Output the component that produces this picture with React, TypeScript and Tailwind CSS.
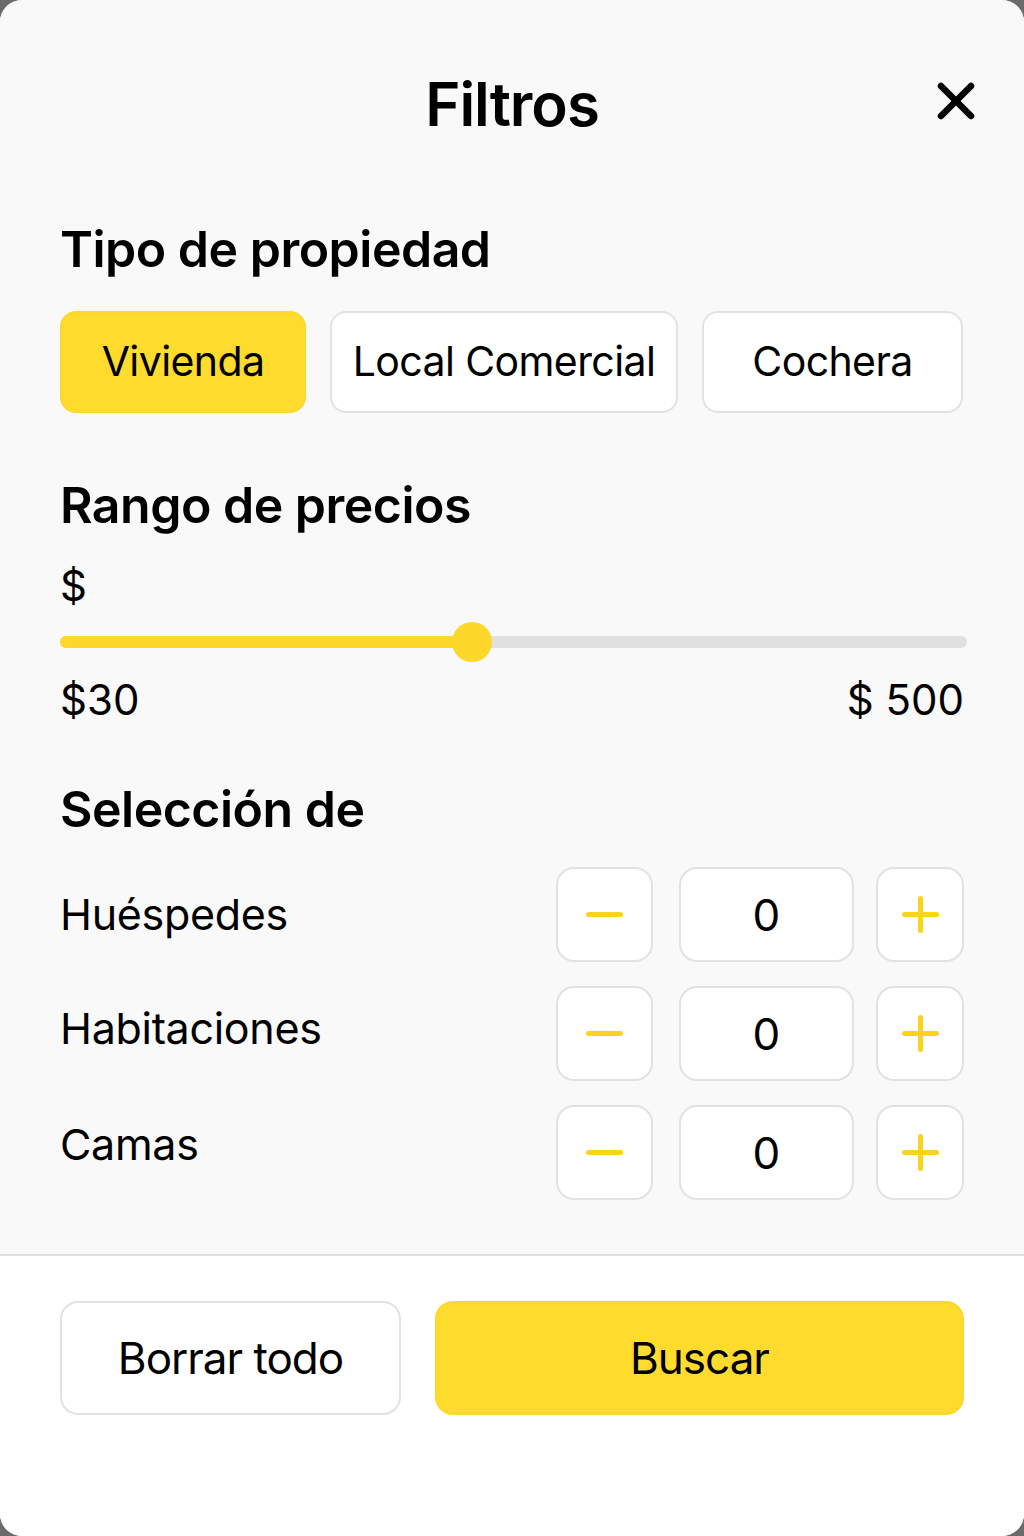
import { X } from "lucide-react";

const TYPES = [
  { label: "Vivienda", w: "w-[246px]", active: true },
  { label: "Local Comercial", w: "w-[348px]", active: false },
  { label: "Cochera", w: "w-[261px]", active: false },
];

// labels sit a bit higher than the box centre on the lower rows
const COUNTERS = [
  { label: "Huéspedes", nudge: "" },
  { label: "Habitaciones", nudge: "mb-[10px]" },
  { label: "Camas", nudge: "mb-[16px]" },
];

function Counter({ label, nudge }: { label: string; nudge: string }) {
  return (
    <div className="flex h-[95px] items-center">
      <span className={`flex-1 text-[43px] tracking-[-0.3px] text-black ${nudge}`}>{label}</span>
      <button
        type="button"
        className="flex h-[95px] w-[97px] items-center justify-center rounded-[18px] border-2 border-[#e2e2e2] bg-white"
      >
        <span className="block h-[5px] w-[37px] rounded-full bg-[#f9d31c]" />
      </button>
      <div className="ml-[26px] flex h-[95px] w-[175px] items-center justify-center rounded-[18px] border-2 border-[#e2e2e2] bg-white text-[44px] text-black">
        0
      </div>
      <button
        type="button"
        className="relative ml-[22px] flex h-[95px] w-[88px] items-center justify-center rounded-[18px] border-2 border-[#e2e2e2] bg-white"
      >
        <span className="absolute h-[5px] w-[37px] rounded-full bg-[#f9d31c]" />
        <span className="absolute h-[37px] w-[5px] rounded-full bg-[#f9d31c]" />
      </button>
    </div>
  );
}

export default function App() {
  return (
    <div className="min-h-[1536px] bg-[#6b6b6b] font-['Inter',sans-serif] text-black">
      <div className="flex h-[1536px] flex-col overflow-hidden rounded-[22px] bg-white">
        <div className="flex-1 bg-[#f9f9f9] px-[60px]">
          {/* header */}
          <div className="relative flex h-[219px] items-start justify-center pt-[66px]">
            <h1 className="text-[60px] font-semibold leading-[76px] tracking-[-1px]">Filtros</h1>
            <button type="button" className="absolute right-[-22px] top-[71px] text-black">
              <X size={60} strokeWidth={2.6} />
            </button>
          </div>

          {/* tipo de propiedad */}
          <h2 className="text-[50px] font-semibold leading-[60px] tracking-[-0.5px]">Tipo de propiedad</h2>
          <div className="mt-[32px] flex gap-[24px]">
            {TYPES.map((t) => (
              <button
                key={t.label}
                type="button"
                className={`${t.w} flex h-[102px] items-center justify-center rounded-[16px] border-2 text-[41px] tracking-[-0.6px] ${
                  t.active ? "border-[#fbd82a] bg-[#fedb2d]" : "border-[#e2e2e2] bg-white"
                }`}
              >
                {t.label}
              </button>
            ))}
          </div>

          {/* rango de precios */}
          <h2 className="mt-[62px] text-[50px] font-semibold leading-[60px] tracking-[-0.5px]">Rango de precios</h2>
          <div className="mt-[26px] text-[42px] leading-[50px]">$</div>
          <div className="relative mt-[11px] h-[40px] w-[907px]">
            <div className="absolute left-0 right-0 top-[14px] h-[12px] rounded-full bg-[#e0e0e0]" />
            <div className="absolute left-0 top-[14px] h-[12px] w-[413px] rounded-full bg-[#fdd82a]" />
            <div className="absolute left-[392px] top-0 h-[40px] w-[40px] rounded-full bg-[#fdd82a]" />
          </div>
          <div className="mt-[13px] flex justify-between text-[42px] leading-[50px]">
            <span>$30</span>
            <span>$ 500</span>
          </div>

          {/* selección */}
          <h2 className="mt-[54px] text-[50px] font-semibold leading-[60px] tracking-[-0.5px]">Selección de</h2>
          <div className="mt-[28px] flex flex-col gap-[24px]">
            {COUNTERS.map((c) => (
              <Counter key={c.label} label={c.label} nudge={c.nudge} />
            ))}
          </div>
        </div>

        {/* footer */}
        <div className="h-[282px] border-t-2 border-[#e0e0e0] bg-white px-[60px] pt-[45px]">
          <div className="flex gap-[34px]">
            <button
              type="button"
              className="flex h-[114px] w-[341px] items-center justify-center rounded-[18px] border-2 border-[#e2e2e2] bg-white text-[44px] tracking-[-1px]"
            >
              Borrar todo
            </button>
            <button
              type="button"
              className="flex h-[114px] flex-1 items-center justify-center rounded-[18px] border-2 border-[#fbd82a] bg-[#fedb2d] text-[44px] tracking-[-1px]"
            >
              Buscar
            </button>
          </div>
        </div>
      </div>
    </div>
  );
}
